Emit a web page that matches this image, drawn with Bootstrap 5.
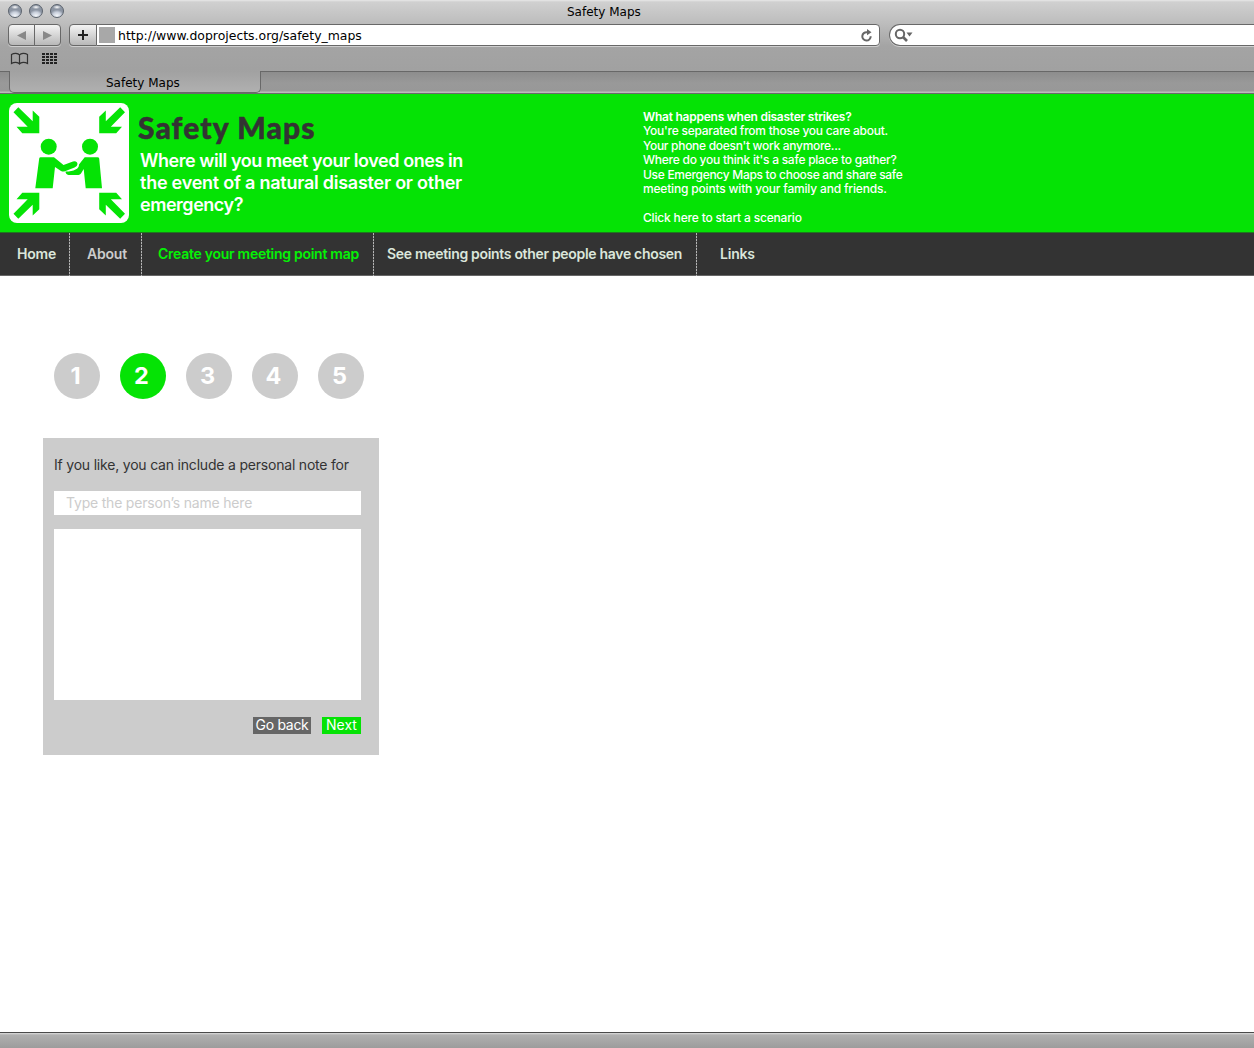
<!DOCTYPE html>
<html lang="en">
<head>
<meta charset="utf-8">
<title>Safety Maps</title>
<link href="https://cdn.jsdelivr.net/npm/bootstrap@5.3.0/dist/css/bootstrap.min.css" rel="stylesheet">
<style>
body{font-family:Inter,"Liberation Sans",sans-serif;color:#333;height:1048px;overflow:hidden;background:#fff}
.chrome{font-family:"DejaVu Sans",sans-serif;font-size:12px;line-height:16px;color:#000;height:94px;background:linear-gradient(#e8e8e8 0,#d0d0d0 2px,#bcbcbc 24px,#a4a4a4 46px,#a1a1a1 70px,#b0b0b0 94px)}
.titlebar{height:24px;padding-left:8px}
.orbs{gap:7px;margin-top:-3px}
.orb{width:14px;height:14px;border-radius:50%;border:1px solid #5d646e;background:radial-gradient(ellipse 7px 6px at 50% 90%,#f4f7fb 0,#c9d0dc 60%,transparent 100%),radial-gradient(ellipse 4px 2px at 50% 18%,#fff,transparent),#8c95a3}
.wintitle{left:567px;top:4px}
.toolbar{height:23px;padding-left:8px}
.tool{height:22px;border:1px solid #686868;background:linear-gradient(#f4f4f4,#b8b8b8);box-shadow:0 1px 0 #cfcfcf}
.tool-back{width:27px;border-radius:4px 0 0 4px}
.tool-fwd{width:27px;border-radius:0 4px 4px 0;margin-left:-1px}
.tool-add{width:28px;border-radius:4px 0 0 4px;margin-left:8px}
.address{width:784px;height:22px;margin-left:-1px;border:1px solid #686868;border-radius:0 4px 4px 0;background:#fff;box-shadow:0 1px 0 #cfcfcf;padding:0 6px 0 2px}
.favicon{width:16px;height:16px;background:#a8a8a8;margin-right:3px}
.url{font-size:12.45px;padding-top:1px}
.searchbox{height:22px;margin-left:9px;border:1px solid #686868;border-right:0;border-radius:11px 0 0 11px;background:#fff;box-shadow:0 1px 0 #cfcfcf;padding-left:4px}
.bookmarks{height:24px;padding:5px 0 0 10px}
.tabstrip{height:23px;border-bottom:1px solid #6a6a6a;background:linear-gradient(#8c8c8c,#999 12px,#989898 20px,#bbb 21px)}
.tab-off{height:1px;background:#686868}
.tab-left{width:9px}
.tab-on{width:252px;height:22px;padding:4px 0 0 96px;border:1px solid #686868;border-top:0;border-radius:0 0 5px 5px;background:linear-gradient(#a1a1a1,#b0b0b0)}
.masthead{height:138px;background:#05e305;padding-left:9px}
.sign{width:120px;height:120px;margin-top:9px}
.brand{font-family:Lato,sans-serif;font-weight:900;font-size:30px;line-height:36px;letter-spacing:1.1px;color:#333;margin-top:15px;margin-left:-2px;-webkit-text-stroke:.5px #333}
.tagline{font-weight:600;font-size:18px;line-height:22px;color:#fff;margin-top:5px}
.pitch{width:490px;margin-left:11px}
.blurb{color:#fff;font-weight:500;font-size:12px;line-height:14.4px;letter-spacing:-.25px;margin-top:16px;margin-left:13px}
.mainnav{height:44px;background:#333;border-top:1px solid #1d7a1d;border-bottom:1px solid #666;font-weight:600;font-size:14px;line-height:20px;letter-spacing:-.2px}
.mainnav a{height:43px;padding-top:11px;color:#dbe6db;text-decoration:none;background:repeating-linear-gradient(#b5b5b5 0 2px,#555 2px 3px) right/1px 100% no-repeat;white-space:nowrap}
.mainnav a:last-child{background:none;padding-left:23px}
.nav-home{width:70px;padding-left:17px}
.nav-about{width:72px;padding-left:17px}
.mainnav .nav-about{color:#ccc}
.mainnav .nav-create{width:232px;padding-left:16px;color:#05f205;letter-spacing:-.27px}
.nav-see{width:323px;padding-left:13px;letter-spacing:-.313px}
.content{height:756px;padding:77px 0 0 43px}
.steps{gap:20px;margin-left:11px}
.step{width:46px;height:46px;border-radius:50%;background:#ccc;color:#fff;font-weight:700;font-size:23.5px;padding:0 3px 1px 0}
.step-on{background:#05e305}
.note{width:336px;height:317px;margin-top:39px;background:#ccc;padding:17px 18px 0 11px;font-size:14px;line-height:20px;letter-spacing:-.2px}
.note .form-control{border:0;border-radius:0;background:#fff}
.who{height:24px;padding:0 12px 2px;font-size:14px;line-height:22px;letter-spacing:-.2px;margin-top:16px}
.who::placeholder{color:#ccc;opacity:1}
.msg{height:171px;margin-top:14px;resize:none}
.acts{margin-top:17px;gap:11px}
.act{height:17px;padding:0 0 1px;border:0;border-radius:0;color:#fff;font-size:14px;line-height:16px}
.act-back{width:58px;background:#666;letter-spacing:-.29px}
.act-next{width:39px;background:#05e305}
.statusbar{height:16px;border-top:1px solid #4a4a4a;background:linear-gradient(#ddd 0,#b0b0b0 2px,#9c9c9c)}
.run-a{letter-spacing:-.44px}.run-b{letter-spacing:-.242px}.run-c{letter-spacing:-.47px}.run-d{letter-spacing:-.3px}.run-e{letter-spacing:-.18px}
</style>
</head>
<body>
<header class="chrome">
 <div class="titlebar d-flex align-items-center position-relative">
  <div class="orbs d-flex"><i class="orb"></i><i class="orb"></i><i class="orb"></i></div>
  <span class="wintitle position-absolute">Safety Maps</span>
 </div>
 <div class="toolbar d-flex">
  <div class="tool tool-back d-flex align-items-center justify-content-center"><svg width="9" height="9"><path d="M9 0v9L0 4.500z" fill="#888"/></svg></div>
  <div class="tool tool-fwd d-flex align-items-center justify-content-center"><svg width="9" height="9"><path d="M0 0v9l9-4.500z" fill="#888"/></svg></div>
  <div class="tool tool-add d-flex align-items-center justify-content-center"><svg width="10" height="10"><path d="M5 0v10M0 5h10" stroke="#222" stroke-width="2"/></svg></div>
  <div class="address d-flex align-items-center"><i class="favicon"></i><span class="url">http://www.doprojects.org/safety_maps</span>
   <svg class="ms-auto" width="12" height="13" fill="none" stroke="#666" stroke-width="2"><path d="M9.700 7.300A4.200 4.200 0 1 1 6 3.200h1"/><path d="M6 0l4.500 3.200L6 6.200z" fill="#666" stroke="none"/></svg></div>
  <div class="searchbox flex-grow-1 d-flex align-items-center"><svg width="19" height="14"><circle cx="6" cy="6" r="4.200" fill="none" stroke="#666" stroke-width="2"/><path d="M9 9l4 4" stroke="#666" stroke-width="2.600"/><path d="M12.500 4.500h6l-3 4z" fill="#666"/></svg></div>
 </div>
 <div class="bookmarks d-flex align-items-start">
  <svg width="19" height="14" fill="none" stroke="#333" stroke-width="1.200"><path d="M9.500 3C8 .800 4 .800 1.500 2.500v9c2.500-1.500 6.500-1.500 8 .500 1.500-2 5.500-2 8-.500v-9C15 .800 11 .800 9.500 3v9.500"/></svg>
  <svg width="16" height="12" class="ms-2 mt-0" viewBox="-5 -1 16 12" overflow="visible" fill="#222"><path d="M0 0h3v2H0zM4 0h3v2H4zM8 0h3v2H8zM12 0h3v2h-3zM0 3h3v2H0zM4 3h3v2H4zM8 3h3v2H8zM12 3h3v2h-3zM0 6h3v2H0zM4 6h3v2H4zM8 6h3v2H8zM12 6h3v2h-3zM0 9h3v2H0zM4 9h3v2H4zM8 9h3v2H8zM12 9h3v2h-3z"/></svg>
 </div>
 <div class="tabstrip d-flex">
  <div class="tab-off tab-left"></div><div class="tab-on">Safety Maps</div><div class="tab-off flex-grow-1"></div>
 </div>
</header>
<section class="masthead d-flex">
 <svg class="sign flex-shrink-0" viewBox="0 0 120 120" fill="#05e305"><rect width="120" height="120" rx="8" fill="#fff"/>
  <path id="arr" d="M9.300 4.300L23.700 18.300V7.500L30.300 13.700V30.300H13.300L7.500 23.700H18.700L4.500 9.300z"/>
  <use href="#arr" transform="matrix(-1 0 0 1 120.500 0)"/><use href="#arr" transform="matrix(1 0 0 -1 0 120)"/><use href="#arr" transform="matrix(-1 0 0 -1 120.500 120)"/>
  <circle cx="39.700" cy="43.700" r="8"/><circle cx="81" cy="43.700" r="8"/>
  <path d="M31.500 54.300H45L54.500 62 64 58.500Q68 57.500 68.500 61 68.500 63 65.500 64.500L56 68.300Q54 69 52 68L46 64 43.700 85.300H26.300L30.200 55.500Q30.500 54.300 31.500 54.300z"/>
  <path d="M75.700 54.300H88.500Q90 54.300 90.200 55.500L93 85.300H76.700L74.700 66 72 70.500Q71 71.900 69.500 71.900H59.500Q56.500 71.500 56.500 68.600 63 68.500 66.500 66.500 70 65 70 61.500z"/>
 </svg>
 <div class="pitch"><h1 class="brand mb-0">Safety Maps</h1>
 <p class="tagline mb-0"><span class="run-a">Where will you meet your loved ones in</span><br><span class="run-b">the event of a natural disaster or other</span><br><span class="run-c">emergency?</span></p></div>
 <p class="blurb mb-0"><b class="fw-semibold">What happens when disaster strikes?</b><br>You're separated from those you care about.<br><span class="run-d">Your phone doesn't work anymore...</span><br>Where do you think it's a safe place to gather?<br><span class="run-d">Use Emergency Maps to choose and share safe</span><br><span class="run-e">meeting points with your family and friends.</span><br><br><span class="run-e">Click here to start a scenario</span></p>
</section>
<nav class="mainnav d-flex">
 <a href="#" class="nav-home">Home</a>
 <a href="#" class="nav-about">About</a>
 <a href="#" class="nav-create">Create your meeting point map</a>
 <a href="#" class="nav-see">See meeting points other people have chosen</a>
 <a href="#">Links</a>
</nav>
<main class="content">
 <div class="steps d-flex"><div class="step d-flex align-items-center justify-content-center">1</div><div class="step step-on d-flex align-items-center justify-content-center">2</div><div class="step d-flex align-items-center justify-content-center">3</div><div class="step d-flex align-items-center justify-content-center">4</div><div class="step d-flex align-items-center justify-content-center">5</div></div>
 <form class="note"><label class="d-block" for="who">If you like, you can include a personal note for</label>
 <input id="who" class="form-control who" placeholder="Type the person’s name here"><textarea class="form-control msg"></textarea>
 <div class="acts d-flex justify-content-end"><button type="button" class="btn act act-back">Go back</button><button type="button" class="btn act act-next">Next</button></div></form>
</main>
<footer class="statusbar"></footer>
<script src="https://cdn.jsdelivr.net/npm/bootstrap@5.3.0/dist/js/bootstrap.bundle.min.js"></script>
</body>
</html>
